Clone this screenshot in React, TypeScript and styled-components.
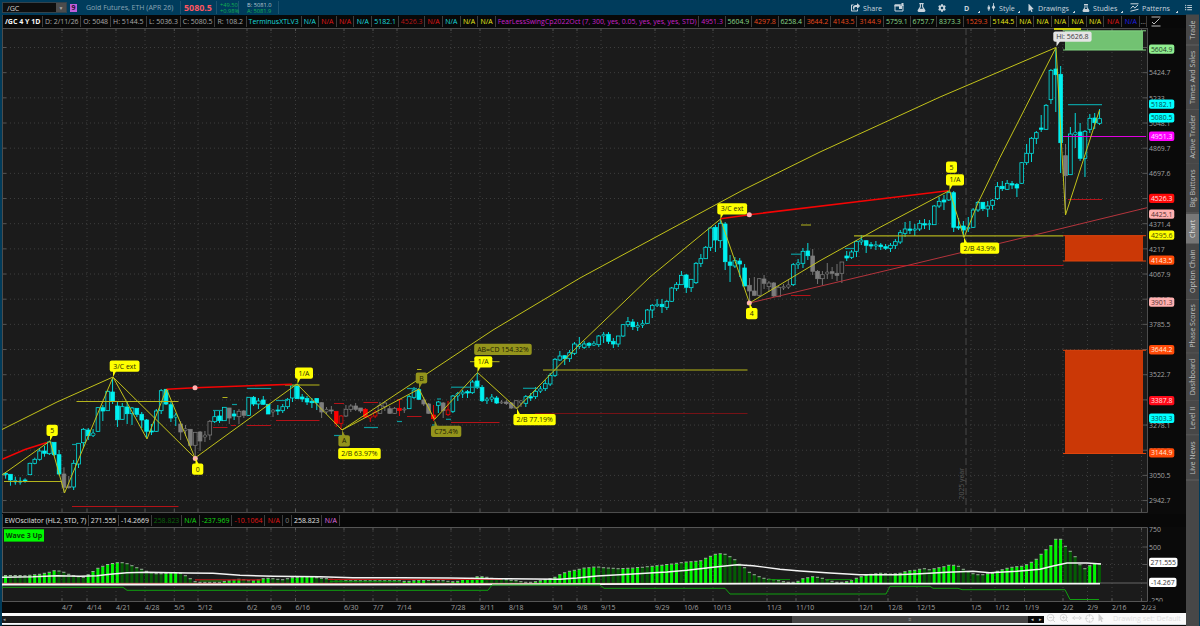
import React from "react"
import styled, { createGlobalStyle } from "styled-components"
import { FaFlask, FaCog, FaMousePointer, FaListUl, FaShareSquare } from "react-icons/fa"
import { ZoomIn, ZoomOut, MoveHorizontal, Crosshair } from "lucide-react"

const GlobalStyle = createGlobalStyle`
  * {
    box-sizing: border-box;
  }
  body {
    margin: 0;
    background: #0a0a0a;
    font-family: "Open Sans", "Noto Sans", sans-serif;
    overflow: hidden;
  }
  svg {
    display: block;
  }
`

const Screen = styled.div`
  display: flex;
  flex-direction: column;
  width: 1200px;
  height: 626px;
  background: #003b5a;
`

const Toolbar = styled.header`
  display: flex;
  align-items: center;
  height: 15px;
  flex: none;
  background: #003c5c;
  color: #c9d4dc;
  font-size: 7.1px;
  white-space: nowrap;
`

const SymbolInput = styled.div`
  display: flex;
  justify-content: space-between;
  align-items: center;
  width: 65px;
  height: 11px;
  margin-left: 2px;
  padding-left: 4px;
  background: #0e0e0e;
  border: 1px solid #33424b;
  color: #d0d0d0;
  font-size: 7.2px;
`

const DropButton = styled.span`
  display: grid;
  place-items: center;
  width: 10px;
  height: 9px;
  background: #4c4c4c;
  color: #aaa;
  font-size: 5px;
`

const LinkBadge = styled.span`
  display: grid;
  place-items: center;
  width: 7px;
  height: 8px;
  margin: 0 5px 0 3px;
  background: #c05fdc;
  color: #2a0d33;
  font-size: 7px;
  font-weight: 700;
  line-height: 8px;
`

const Quote = styled.div<{ w: number; color?: string; size?: number; bold?: boolean; pad?: number }>`
  display: flex;
  flex-direction: column;
  justify-content: center;
  align-items: flex-start;
  width: ${(p) => p.w}px;
  height: 13px;
  padding-left: ${(p) => p.pad || 4}px;
  color: ${(p) => p.color || "#8ba5b4"};
  font-size: ${(p) => p.size || 7}px;
  line-height: ${(p) => (p.size && p.size < 6 ? "6px" : "13px")};
  font-weight: ${(p) => (p.bold ? 700 : 400)};
  border-right: 1px solid #1d536f;
`

const Bid = styled.span`
  color: #b6c6d0;
`

const Spacer = styled.div`
  flex: 1;
`

const ToolButton = styled.div<{ w: number; corner?: boolean }>`
  display: flex;
  align-items: center;
  gap: 3px;
  width: ${(p) => p.w}px;
  height: 15px;
  flex: none;
  background: ${(p) =>
    p.corner ? "linear-gradient(135deg, transparent 50%, #c3ced6 50%) right 7px bottom 2px / 2px 2px no-repeat" : "none"};
`

const Body = styled.div`
  display: flex;
  flex: 1;
  min-height: 0;
`

const Workspace = styled.main`
  display: flex;
  flex-direction: column;
  width: 1184px;
  margin-left: 2px;
  background: #0a0a0a;
`

const StudyRow = styled.div<{ h: number }>`
  display: flex;
  height: ${(p) => p.h}px;
  flex: none;
  background: #080808;
  border-left: 1px solid #444;
`

const StudyCell = styled.div<{ w: number; c: string; bold?: boolean }>`
  display: flex;
  justify-content: center;
  width: ${(p) => p.w}px;
  flex: none;
  margin: 1px 0;
  line-height: 11px;
  color: ${(p) => p.c};
  font-size: ${(p) => (p.bold ? 7 : 6.95)}px;
  font-weight: ${(p) => (p.bold ? 700 : 400)};
  border-right: 1px solid #3d3d3d;
  white-space: nowrap;
`

const ScrollRow = styled.div`
  display: flex;
  height: 12px;
  flex: none;
  background: #fafafa;
  border-bottom: 1px solid #d6dde2;
`

const ScrollTrack = styled.div`
  display: flex;
  justify-content: space-between;
  align-items: center;
  width: 1026px;
  height: 7px;
  margin-top: 3px;
  padding-left: 1px;
  background: #1c1c1c;
  color: #999;
  font-size: 5px;
`

const ScrollThumb = styled.div`
  width: 236px;
  height: 7px;
  line-height: 6px;
  text-align: center;
  background: #464646;
`

const ScrollButtons = styled.div`
  display: flex;
  justify-content: space-around;
  width: 16px;
  height: 7px;
  margin-top: 3px;
  line-height: 6px;
  background: #080808;
  color: #ccc;
  font-size: 5px;
`

const DrawTools = styled.div`
  display: flex;
  align-items: center;
  gap: 3px;
  flex: 1;
  padding-left: 2px;
  color: #cfcfcf;
  font-size: 7.2px;
  white-space: nowrap;
`

const DrawSet = styled.span`
  margin-left: 5px;
  color: #dedede;
`

const Sidebar = styled.aside`
  width: 13px;
  background: #474747;
`

const SideTab = styled.div<{ h: number; active?: boolean }>`
  display: flex;
  align-items: center;
  justify-content: center;
  width: 13px;
  height: ${(p) => p.h}px;
  background: ${(p) => (p.active ? "#777" : "#474747")};
  border-top: 1px solid #606060;
  color: ${(p) => (p.active ? "#dedede" : "#c0c0c0")};
  font-size: 7.1px;
  line-height: 13px;
  writing-mode: vertical-rl;
  transform: rotate(180deg);
  white-space: nowrap;
`

const CYAN = "#18dcdf"
const RED = "#e01616"
const GREEN = "#8ad88a"
const ORANGE = "#e84a1c"
const YELLOW = "#ecec18"
const GREY = "#a8a8a8"

const priceStudies: [string, number, string][] = [
  ["/GC 4 Y 1D", 40.3, "#f6f6f6"],
  ["D: 2/11/26", 38, GREY],
  ["O: 5048", 29.7, GREY],
  ["H: 5144.5", 35.6, GREY],
  ["L: 5036.3", 34.7, GREY],
  ["C: 5080.5", 33.7, GREY],
  ["R: 108.2", 31.7, GREY],
  ["TerminusXTLV3", 55, CYAN],
  ["N/A", 17.4, CYAN],
  ["N/A", 17.6, RED],
  ["N/A", 17.7, RED],
  ["N/A", 18, CYAN],
  ["5182.1", 26.7, CYAN],
  ["4526.3", 26.3, "#b81616"],
  ["N/A", 17.6, RED],
  ["N/A", 17.7, CYAN],
  ["N/A", 17.8, YELLOW],
  ["N/A", 17.5, YELLOW],
  ["FearLessSwingCp2022Oct (7, 300, yes, 0.05, yes, yes, yes, STD)", 203.5, "#c820c8"],
  ["4951.3", 26.3, "#c820c8"],
  ["5604.9", 26.5, GREEN],
  ["4297.8", 26.4, ORANGE],
  ["6258.4", 26.3, GREEN],
  ["3644.2", 26.2, ORANGE],
  ["4143.5", 26.4, ORANGE],
  ["3144.9", 26.6, ORANGE],
  ["5759.1", 26.6, GREEN],
  ["6757.7", 26.4, GREEN],
  ["8373.3", 26.8, GREEN],
  ["1529.3", 26.7, ORANGE],
  ["5144.5", 26.7, YELLOW],
  ["N/A", 17.3, YELLOW],
  ["N/A", 17.4, YELLOW],
  ["N/A", 17.6, YELLOW],
  ["N/A", 17.4, YELLOW],
  ["N/A", 17.6, YELLOW],
  ["N/A", 18, RED],
  ["N/A", 17.7, "#2020e8"],
  ["...", 7, GREY],
]

const oscStudies: [string, number, string][] = [
  ["EWOscilator (HL2, STD, 7)", 86, "#e0e0e0"],
  ["271.555", 30, "#e0e0e0"],
  ["-14.2669", 33, "#e0e0e0"],
  ["258.823", 30, "#0c640c"],
  ["N/A", 17.7, "#14dc14"],
  ["-237.969", 32.8, "#14dc14"],
  ["-10.1064", 33, RED],
  ["N/A", 17.5, RED],
  ["0", 9.3, "#808080"],
  ["258.823", 30, "#e0e0e0"],
  ["N/A", 18, "#e070e0"],
]

const sideTabs: [string, number][] = [
  ["Trade", 30.5],
  ["Times And Sales", 64],
  ["Active Trader", 54.5],
  ["Big Buttons", 49.5],
  ["Chart", 30],
  ["Option Chain", 56],
  ["Phase Scores", 53.7],
  ["Dashboard", 48.3],
  ["Level II", 34.5],
  ["Live News", 44.5],
]

// kind high top bottom low
// u/d = cyan hollow/solid, h/g = grey hollow/solid, s/r = red hollow/solid
const candleData = `
d 472 473.3 474.3 478.7|d 474 474.3 480 485.7|u 476.7 480.3 482 484.7|u 477.3 481 482.3 484.7|d 478.3 480 481.3 482.7
u 462.7 463.3 474.7 475|u 457.7 459.3 463.3 464.3|u 448 451 459.3 460.7|d 446 451 453.3 456.7|u 440.7 442 453.7 455
d 442 442.3 454.7 456|d 450 454.7 474 475|g 467.3 474 487.3 492.7|g 476 486.7 487.7 488.7|u 460 463.3 487 490
u 443 443.3 464 468|u 428 429.3 442.7 448|d 428 430 435.7 440|u 429 433 435.7 437|u 407 407.7 431.3 432
d 405 407.7 411 421|u 390 391.3 410.7 411|d 378 392 401.3 404|d 401.3 406 419.7 427|u 403 406.7 419.3 420
d 401 407 413.7 424|u 407 408 413.7 425|d 408 408.3 414.3 417|d 412 414.3 420 428|d 419 420 431.3 438
d 424 431 432 435|u 409 411 431.3 432|u 389 390.7 410.7 414|d 389 389.3 404 405|d 401 404.7 418 422
u 413 415 417.3 426|g 421 424 432 440|h 425 428.7 430.7 436|g 429 429.3 445.3 447|h 432 432.3 445.3 458
g 431 432 441 451|h 431 435 437.3 442|h 420 421.3 435 440|u 410 416.7 421.7 423|d 411 416 420.7 423
u 407 407.3 420.7 421|g 408 408 418 424|d 410 414 416 420|h 409 411.3 416.7 424|g 410 411 415.3 418
u 397 397.3 415.3 416|d 396 397.3 404 406|u 398 401 404 409|d 396 400 404.3 405|d 404 404.3 414 414
h 409 410 412 417|d 405 410 411 415|u 404 406.7 410.7 413|u 398 399.3 406.7 409|u 385 386 398 402
d 384 384.3 398.7 399|d 394 397 399 402|d 396 398.5 402 405|d 398 401.3 402.7 408|d 398 398.5 402.7 410
g 402 402.7 412 418|h 407 409.3 412 414|g 406 410 411 414|r 411 411.3 423.3 427|s 415 416 423.3 430
h 405 409.3 416 417|h 404 406 409.3 412|g 403 406 409.3 411|g 408 408 411 413|r 408 409.3 417 418
s 415 415.7 418 422|s 410 412.7 416 418|h 402 405.3 413.3 414|h 401 403 406.7 411|g 406 408.7 413.3 414
h 407 408.3 413.3 414|r 400 408.3 410.5 416|h 407 409 410 413|u 395 396.7 408.7 409|u 387 390 397.3 399
d 388 389.7 399.3 400|g 397 400 404 406|g 403 404 413.3 414|r 405 415 418.7 421|u 401 402 405.3 413
g 402 403 410.7 418|s 401 410 414.7 416|u 395 396 411.3 413|u 392 393.3 396 401|u 390 392 394 398
d 390 391.7 393 398|u 380 382 392.7 394|d 373 381 387.7 389|d 385 387.3 400.7 402|u 397 399 400.7 404
u 394 397 399.3 402|d 396 398 403 404|h 400 402 403 404|g 400 402 403.5 405|g 402 403 408 409
h 400 400.7 408 409|h 400 400.7 403 407|u 395 396.7 403.3 407|d 393 396.7 398 401|u 387 391.3 396.7 399
u 386 388.7 391.3 393|u 380 383.7 388.7 391|u 373 375.3 384 386|u 358 359.3 375.3 377|u 351 356 360 361
d 355 355.7 358.7 365|u 350 352.7 358.7 362|u 342 344 353.3 355|u 337 344.5 346.5 349|u 341 344 347.3 349
d 342 343.3 345.3 348|u 341 343.3 345.3 346|u 335 336 344.7 347|u 332 334.3 336 343|d 332 334.3 341.3 344
d 338 341.3 344 348|u 336 336 344 347|u 324 324.7 336 337|u 317 321.7 324.7 327|d 319 322 326.7 330
u 322 325.3 327.3 331|u 320 323.3 325.3 328|u 309 310 323.3 324|u 304 305.3 310 318|u 299 304.3 305.7 307
d 299 304.3 306.7 313|u 300 301.3 307.3 310|u 287 288 301.3 302|u 282 284.3 288.7 291|u 271 275.3 284.7 285
d 274 275 287.3 293|u 279 279.3 287.7 292|u 262 263.3 282.7 284|u 254 258.7 263.3 267|u 246 247.3 258.7 259
u 227 228 247.3 251|d 225 227.3 240 252|u 220 223.3 240.7 248|d 222 224 261.7 270|d 255 262 265.3 282
u 257 260.7 266 268|d 258 261 264 277|d 264 268 286 286|g 278 285.3 291 303|g 277 291 295.3 296
h 278 278.7 295.3 297|g 275 279 283.3 289|h 281 283 286.7 292|g 282 283 296 297|h 286 287.3 296.7 297
h 284 286.7 288 290|h 280 284.7 287.3 289|u 263 264.7 284.7 286|u 259 262.7 264.7 269|u 248 251.3 263.3 268
d 243 251 255.7 260|g 249 256 271.3 275|g 270 271.3 278.7 284|h 271 274.7 278.7 285|h 263 272 274 279
g 267 271.7 273.3 279|g 264 273.3 275.3 281|h 262 262 273.3 283|d 251 256 258 261|u 250 252 257.3 259
u 240 241.3 251.3 257|u 235 240 242 245|d 240 240.7 245.3 253|d 242 244.7 246 249|u 241 244.7 246 250
d 243 245 246.7 250|d 244 246.7 248.3 250|u 243 245.3 248.3 252|u 239 241.7 245.3 249|u 230 232.7 242 244
u 222 229 233.3 237|d 221 229 230.3 234|u 224 229 230.3 236|u 220 223.3 229 231|d 219 223.7 225 229
u 220 223.7 224.7 230|u 205 206 224.7 225|u 197 201.3 206 208|d 195 200 202 210|u 191 192.7 200 201
d 191 192.7 227.3 232|d 218 226.7 228 230|d 221 226 230 237|u 217 227.3 228.7 232|u 208 210 227.3 228
u 201 202.3 210 212|d 202 202.3 208.7 211|u 201 206 209 217|u 199 200.3 205.3 210|u 182 186.7 198.7 200
d 181 186.3 188.7 191|u 180 183.3 189.3 190|d 181 183.7 185 189|d 183 184.3 188 197|u 162 162.7 183.3 184
u 144 153.3 162.7 165|u 137 138.3 153.3 162|u 131 132.7 138.3 144|d 115 128 129.3 132|u 104 105.3 129.3 130
u 69 70.3 99.7 104|d 48 69 74.7 112|d 66 74.3 142.7 173|g 144 155.7 175.7 214|u 127 134 174.7 175
u 113 132.3 134.7 148|d 123 132 158.3 161|u 130 131.3 158.3 177|u 114 118.3 129.3 133|d 113 118 122.7 129
u 109 118.7 123.3 125`

const candles = candleData
  .trim()
  .split(/[|\n]/)
  .map((row) => {
    const [kind, ...nums] = row.split(" ")
    const [high, top, bottom, low] = nums.map(Number)
    return { kind, high, top, bottom, low }
  })

const barX = (i: number) => 5.6 + i * 4.862

const gridX = [62, 87, 116, 145, 174.3, 198, 247, 271, 295.5, 344, 373, 397, 451, 480, 509, 553, 577, 601, 655, 684, 713, 767, 796, 859, 888, 917, 971, 995, 1024.5, 1063, 1087.5, 1112, 1141.5]
const dates = ["4/7", "4/14", "4/21", "4/28", "5/5", "5/12", "6/2", "6/9", "6/16", "6/30", "7/7", "7/14", "7/28", "8/11", "8/18", "9/1", "9/8", "9/15", "9/29", "10/6", "10/13", "11/3", "11/10", "12/1", "12/8", "12/15", "1/5", "1/12", "1/19", "2/2", "2/9", "2/16", "2/23"]
const gridY = Array.from({ length: 19 }, (_, i) => 47.5 + i * 25.17)

const ticks: [string, number][] = [
  ["5424.7", 72.7], ["5233", 98], ["5048.1", 123.3], ["4869.7", 148.5], ["4697.6", 173.7], ["4371.4", 224], ["4217", 249.3],
  ["4067.9", 274.5], ["3924.2", 299], ["3785.5", 324.5], ["3522.7", 374.7], ["3278.1", 425.2], ["3155.9", 450.3], ["3050.5", 475.5], ["2942.7", 500.6],
]

const priceTags: [string, number, string, string][] = [
  ["5604.9", 49, "#90ee90", "#26402a"],
  ["5182.1", 104, "#00ffff", "#084a4a"],
  ["5080.5", 117.7, "#00ffff", "#084a4a"],
  ["4951.3", 136.2, "#ff00ff", "#ffe0ff"],
  ["4526.3", 198.3, "#ff0a0a", "#ffe0e0"],
  ["4425.1", 214, "#ffb0b0", "#553030"],
  ["4295.6", 235, "#ffff00", "#4a4a08"],
  ["4143.5", 260, "#ff4a08", "#ffe6d8"],
  ["3901.3", 302, "#ffb0b0", "#553030"],
  ["3644.2", 349.7, "#ff4a08", "#ffe6d8"],
  ["3387.8", 400.5, "#ff0a1a", "#ffe0e0"],
  ["3303.3", 418.2, "#00ffff", "#084a4a"],
  ["3144.9", 452.8, "#ff4a08", "#ffe6d8"],
]

const trendLines = [
  "2,429.5 57,402 113,377",
  "2,475 50,441 64.5,493 113,377 147,439 166.5,389 195,458",
  "113,377 195,458 297,384 342,430 419,389 434.5,419.5 477.5,372.5 517,408.5 580,344 650,277 720.5,219 749.5,303 820,260.7 880,227.3 949.5,190.5 964,237.5 978,203 1000,157.5 1056,47.5 1065.5,215 1099.5,110",
  "342,430 493,330 580,278 743,190 820,152 940,97 1056,47.5",
]

// x1, x2, y
const levels: { color: string; width: number; rows: number[][] }[] = [
  { color: "#b4b41c", width: 1, rows: [[4, 62, 481.5], [76.5, 178.5, 401.5], [470, 499.5, 361.7], [801, 811, 225], [417, 421.5, 369.5], [222.5, 227.5, 397.5]] },
  { color: "#85851a", width: 1.7, rows: [[285, 319.5, 385], [543, 747.5, 370]] },
  { color: "#b0b01c", width: 1.3, rows: [[854, 1063, 235.8]] },
  { color: "#f0f000", width: 1.6, rows: [[1054, 1081, 29]] },
  { color: "#b41218", width: 1, rows: [[72, 178.5, 506.5], [213, 227.5, 427.5], [231, 236, 425.5], [247, 271, 425.5], [276, 319.5, 420.5], [334, 344, 403.5], [363.5, 378, 402.5], [397, 402, 399.5], [407, 421.5, 416.5], [451, 499.5, 422.5], [791, 810.5, 295.5], [845, 1063.5, 265.5], [1068, 1102, 199.5]] },
  { color: "#761216", width: 1, rows: [[535, 747.5, 413.5]] },
  { color: "#0b9a9d", width: 1.2, rows: [[213, 222, 410.5], [232, 237, 404.5], [72, 77, 444.5], [247, 271, 388.5], [276, 288, 400.5], [334, 342, 435.5], [364, 378, 427.5], [397, 402, 421.5], [407, 417, 388.5], [451, 480, 387.2], [437, 441, 399], [446, 451, 419.3], [432, 436, 425], [523, 538, 388.3], [791, 801, 254.2], [845, 854, 248.5], [1068, 1102, 104.6]] },
]

// text, x, y, width, pointer tip x, pointer tip y, olive
const bubbles: [string, number, number, number, number, number, boolean?][] = [
  ["5", 46.5, 424.7, 11.3, 50, 441],
  ["3/C ext", 109.7, 360.5, 29.8, 113, 377],
  ["0", 192, 463.5, 11.3, 195.5, 458],
  ["1/A", 295, 367.5, 18, 297.5, 384],
  ["A", 338.4, 435.3, 11.5, 342, 430, true],
  ["2/B 63.97%", 338.2, 448, 42.5, 0, 0],
  ["B", 415.7, 372.4, 11.5, 419, 389, true],
  ["C75.4%", 431, 425.7, 30.3, 434.5, 420, true],
  ["AB=CD 154.32%", 474.2, 343.7, 57.5, 0, 0, true],
  ["1/A", 474.3, 356.3, 18, 477.5, 372.5],
  ["2/B 77.19%", 513.4, 414, 42.3, 517, 408.5],
  ["3/C ext", 717.3, 203.3, 29.8, 720.5, 219],
  ["4", 746, 308, 11.5, 749.5, 303],
  ["5", 946, 161.5, 11, 0, 0],
  ["1/A", 946, 174.2, 18, 949.5, 190.5],
  ["2/B 43.9%", 960.2, 242.5, 39, 964, 237.5],
]

const candleColor = (kind: string) => (kind === "g" || kind === "h" ? "#7d7d7d" : kind === "r" || kind === "s" ? "#f00" : "#00f0f0")

function Candles() {
  return (
    <g>
      {candles.map((c, i) => {
        const x = barX(i)
        const color = candleColor(c.kind)
        const solid = "dgr".includes(c.kind)
        const h = c.bottom - c.top
        return (
          <g key={i} stroke={color} strokeWidth={0.9}>
            <line x1={x} x2={x} y1={c.high} y2={c.top} />
            <line x1={x} x2={x} y1={c.bottom} y2={c.low} />
            <rect
              x={x - 1.85}
              y={c.top}
              width={3.7}
              height={Math.max(h, 1)}
              rx={!solid && h < 3 ? 1.2 : 0}
              fill={solid ? color : "#1b1b1b"}
              strokeWidth={0.75}
            />
          </g>
        )
      })}
    </g>
  )
}

function Bubble({ data }: { data: (typeof bubbles)[number] }) {
  const [text, x, y, w, px, py, olive] = data
  const fill = olive ? "#94941c" : "#ffff00"
  const edge = py > y ? y + 9 : y + 2
  return (
    <g>
      {px > 0 && <path d={`M${px} ${py}L${px} ${edge}H${px + 4}Z`} fill={fill} />}
      <rect x={x} y={y} width={w} height={11.2} rx={2} fill={fill} />
      <text x={x + w / 2} y={y + 8.1} fontSize={6.95} textAnchor="middle" fill={olive ? "#1a1a04" : "#2c2c08"}>
        {text}
      </text>
    </g>
  )
}

function AxisTag({ y, w, fill, color, text }: { y: number; w: number; fill: string; color: string; text: string }) {
  return (
    <g>
      <rect x={1149} y={y - 4.6} width={w} height={9.3} rx={2} fill={fill} />
      <text x={1149 + w / 2} y={y + 2.5} fontSize={6.9} textAnchor="middle" fill={color}>
        {text}
      </text>
    </g>
  )
}

function PriceChart() {
  return (
    <svg width={1184} height={486} viewBox="2 28 1184 486">
      <rect x={2} y={28} width={1184} height={486} fill="#0a0a0a" />
      <rect x={2} y={28} width={1145} height={484} fill="#1b1b1b" />
      <g stroke="#3e3e3e" strokeDasharray="1 3">
        {gridX.map((x) => (
          <line key={x} x1={x} x2={x} y1={28} y2={512} />
        ))}
        {gridY.map((y) => (
          <line key={y} x1={2} x2={1147} y1={y} y2={y} />
        ))}
      </g>
      <g stroke="#555">
        {gridX.map((x) => (
          <path key={x} d={`M${x} 28v3M${x} 509v3`} />
        ))}
        {gridY.map((y) => (
          <path key={y} d={`M2 ${y}h4M1143 ${y}h4`} />
        ))}
      </g>
      <path d="M966 28V512" stroke="#414141" strokeWidth={1.2} strokeDasharray="7 3" />
      <text transform="translate(964 499.5) rotate(-90)" fontSize={6.9} fill="#5a5a5a">2025 year</text>
      <path d="M2.5 28V513M2 512.5H1147.5V28M2 28.5H1147" stroke="#4c4c4c" fill="none" />

      <rect x={1065} y={31} width={78} height={19} fill="#72c272" />
      <path d="M1063 30.8h83M1063 50h83" stroke="#84d884" />
      <rect x={1065} y={235.5} width={78} height={25.5} fill="#cb3806" />
      <rect x={1065} y={350.3} width={78} height={103} fill="#cb3806" />
      <path d="M1063 235.7h83M1063 261h83M1063 350.3h83M1063 453.5h83" stroke="#df440c" />

      <Candles />

      {levels.map((set) => (
        <g key={set.color} stroke={set.color} strokeWidth={set.width}>
          {set.rows.map(([x1, x2, y]) => (
            <line key={x1 + "-" + y} x1={x1} x2={x2} y1={y} y2={y} />
          ))}
        </g>
      ))}
      <path d="M1063 136.5H1146" stroke="#e000e0" strokeWidth={1.1} />
      <path d="M749.5 303L880 272L1040 233.7L1147 207.7" stroke="#b4343c" fill="none" />
      <g stroke="#f40404" strokeWidth={1.6} fill="none">
        <path d="M2 459.3L25 449.5L47 442.5" />
        <path d="M166.5 389.3L195 387.8L292 384.2" />
        <path d="M720.5 218.7L749.3 214.7L880 199L948 190.8" />
      </g>
      {trendLines.map((points) => (
        <polyline key={points} points={points} stroke="#c2c21a" fill="none" />
      ))}
      {[[195, 387.8], [195.3, 458.5], [749.3, 214.7], [749.3, 303]].map(([x, y]) => (
        <circle key={x + y} cx={x} cy={y} r={2.5} fill="#ffb3b3" />
      ))}
      {bubbles.map((b, i) => (
        <Bubble key={i} data={b} />
      ))}
      <path d="M1056.5 46.5V40H1061Z" fill="#e4e4e4" />
      <rect x={1053.3} y={31.6} width={38.3} height={10.2} rx={2} fill="#e4e4e4" />
      <text x={1072.4} y={39.3} fontSize={7} textAnchor="middle" fill="#3c3c3c">Hi: 5626.8</text>

      {ticks.map(([t, y]) => (
        <text key={t} x={1149} y={y + 2.5} fontSize={6.9} fill="#a2a2a2">{t}</text>
      ))}
      {priceTags.map(([t, y, fill, color]) => (
        <AxisTag key={t} text={t} y={y} w={25.3} fill={fill} color={color} />
      ))}
    </svg>
  )
}

// top of each histogram bar, b = rising, d = falling
const oscBars = (
  "b575.7 d575.7 d575.7 d575.7 d576 b575.5 b575 b574.5 b573.5 b572.5 b571 d571.3 d572.5 d574.5 d576 d577 d577.5 b575 b571.7 b568.5 b566.5 b564.7 b563.7 b563 d563 d564 d566 d568 d569.5 d571.5 " +
  "d573 d574 d574 b573.5 b573 b573 d573.5 d576 d579 d582 d582.5 d582.5 d582.5 d582.5 d582.5 b581.5 b581 b580.3 b579.5 d580 d581 b581 b580 b579 b578.5 d579 d579.5 d580 d579 b578 " +
  "b577.5 b577 b577 b577 d578 d578.5 d579 d579.5 d580 d580 d580.5 d581 d581 d581 d581 d581 d581 d581 d581 d581 d581 d581 b581.5 b581.5 b581 b580.5 b580.5 d580.5 d580.5 d581 " +
  "d581 d581.5 b582 b581.5 b580 b579.5 b578.5 b577 b577 d577.5 d578.5 d579 d579 d580 d580.5 d581 d582 d582.5 d582.5 b582 b581 b580 b579 b577.5 b575 b573 b571.5 b570.5 b569.5 b568.3 " +
  "b568 b567.3 d567.3 d568 d568.3 d568.5 d569 b568.7 b568.5 b568.3 b567.7 d567.5 d567 b566.5 b566 b565.5 b564.7 b564.3 b563.5 d563 b562.3 b562 b561.5 b561 b558.5 b556.5 b554.5 b554 d554.5 d557 " +
  "d560 d564.5 d568 d572.5 d575 d577 d578.5 d579.5 d580 d581 d582 d582.5 d582.5 b581.5 b579 b578 b577 d577.5 d578.5 d580 d581.5 d582.5 d582.5 b582 b581 b578.5 b577 b575.5 b574.5 b574 " +
  "b573.5 d574 d574.3 b574 b573.5 b572 b571 b570.5 b569.5 d569 d570 b569 b568 b567 b565.5 b565.5 d566.5 d569.5 d572 d574 d575 d575 b574 b573.5 b571.5 b570 b568.5 b567.5 b567 b566.5 " +
  "b565 b562.5 b559.5 b554.5 b550 b546 b539.5 b539.5 d546.5 d551.5 d557 d565 d569 b566 b564 d564"
).split(" ")

function Oscillator() {
  return (
    <svg width={1184} height={85.5} viewBox="2 527 1184 85.5">
      <rect x={2} y={527} width={1184} height={86} fill="#0a0a0a" />
      <rect x={2} y={527} width={1145} height={74.5} fill="#1b1b1b" />
      <g stroke="#3e3e3e" strokeDasharray="1 3">
        {gridX.map((x) => (
          <line key={x} x1={x} x2={x} y1={527} y2={601} />
        ))}
        <path d="M2 547H1147M2 564.5H1147" />
      </g>
      <g stroke="#555">
        {gridX.map((x) => (
          <path key={x} d={`M${x} 527v3.5M${x} 598v3.5`} />
        ))}
        <path d="M1143 547h4M1143 564.5h4" />
        <path d="M2.5 527V601.5M2 527.5H1147.5V601.5H2" fill="none" />
      </g>
      {oscBars.map((bar, i) => {
        const top = Number(bar.slice(1))
        return (
          <g key={i}>
            <rect x={barX(i) - 1.6} y={top} width={3} height={583 - top} fill={bar[0] === "b" ? "#00f400" : "#045c04"} />
            <rect x={barX(i) - 1.7} y={top - 0.7} width={3.2} height={0.9} fill="#a8c4a8" />
          </g>
        )
      })}
      <path d="M1100 583H1147" stroke="#666" />
      <path d="M195 579.8H262M328 579.3H502" stroke="#b81414" strokeWidth={1.2} />
      <path d="M200 581H222M330 581.3H400M768 579.6H790M826 579.6H852" stroke="#0a900a" />
      <path d="M2 583.4H790" stroke="#e08080" />
      <path d="M2 584.7H345L790 583.6H1100" stroke="#f8f8f8" strokeWidth={1.7} fill="none" />
      <polyline
        fill="none"
        stroke="#10a010"
        points="2,587.3 123,587.3 127,590.3 488,590.3 492,585 600,585 604,588.3 725,588.3 730,594 886,594 890,586.3 930,586.3 933,588.3 958,588.3 962,589.7 1065,589.7 1070,599.5 1099,599.5"
      />
      <polyline
        fill="none"
        stroke="#f4f4f4"
        strokeWidth={1.4}
        points="2,577.3 33,576.7 57,575.7 80,576.3 97,575.7 110,574.3 127,572.7 147,572.3 187,573 213,573.3 240,575.3 273,576.3 320,576.7 353,577.7 400,577.8 450,578 500,578.7 560,579.3 577,578 597,576 633,574 667,572 687,570.3 713,567.3 737,564.7 753,565.7 780,569.3 800,571 830,573 860,574.7 897,574.7 920,573.7 947,572.3 973,571.3 990,572.7 1017,571.3 1040,569.3 1053,566 1067,563 1087,563 1101,564"
      />
      <rect x={4} y={529.3} width={40} height={12.3} fill="#00f800" />
      <text x={24} y={538.1} fontSize={7} fontWeight={700} textAnchor="middle" fill="#064006">Wave 3 Up</text>
      {dates.map((d, i) => (
        <text key={d} x={gridX[i]} y={610} fontSize={6.9} fill="#a2a2a2">{d}</text>
      ))}
      <g fontSize={6.9} fill="#a2a2a2">
        <text x={1149} y={531.8}>750</text>
        <text x={1149} y={549.6}>500</text>
        <text x={1149} y={603}>-250</text>
      </g>
      <rect x={1148} y={601.5} width={30} height={4} fill="#0a0a0a" />
      <AxisTag y={562.3} w={28.5} fill="#fff" color="#333" text="271.555" />
      <AxisTag y={582.3} w={27.5} fill="#fff" color="#333" text="-14.267" />
    </svg>
  )
}

const CandleIcon = () => (
  <svg width="9" height="9" viewBox="0 0 9 9" fill="none" stroke="currentColor">
    <path d="M1.8 2v6M6.5 0v8" strokeWidth=".8" />
    <rect x=".6" y="3.6" width="2.4" height="2.8" fill="currentColor" stroke="none" />
    <path d="M6.5 1.8L8.3 4.3L6.5 6.8L4.7 4.3Z" fill="currentColor" stroke="none" />
  </svg>
)

const CalendarIcon = () => (
  <svg width="10" height="9" viewBox="0 0 10 9">
    <path d="M1 2H9V8H1Z" fill="none" stroke="currentColor" />
    <path d="M.5 1.5h6v2h-6zM5 3h3v3H5zM7.5 0h2v3h-2z" fill="currentColor" />
  </svg>
)

const PatternIcon = () => (
  <svg width="9" height="9" viewBox="0 0 9 9" fill="none" stroke="currentColor">
    <path d="M.5 .8H8.5M.5 8.2L8.5 6.2M.8 5.5L3 3L4.8 5L8 2" />
  </svg>
)

const AxisIcon = () => (
  <svg width="10" height="11" viewBox="0 0 10 11" fill="none" stroke="#bdbdbd">
    <path d="M.5 1H9.5M.5 10H9.5M1 6L3 8L8.5 2.5" />
  </svg>
)

const AxisIconCell = styled.div`
  margin: 1px 0 0 4px;
`

const App = () => {
  return (
    <Screen>
      <GlobalStyle />
      <Toolbar>
        <SymbolInput>
          /GC <DropButton>▼</DropButton>
        </SymbolInput>
        <LinkBadge>9</LinkBadge>
        <Quote w={99} size={7}>Gold Futures, ETH (APR 26)</Quote>
        <Quote w={36} color="#ff5560" size={8.9} bold pad={3}>5080.5</Quote>
        <Quote w={22} color="#14b052" size={5.7} pad={3}>
          <span>+49.50</span>
          <span>+0.98%</span>
        </Quote>
        <Quote w={40} color="#14b052" size={5.7} pad={8}>
          <Bid>B: 5081.0</Bid>
          <span>A: 5081.9</span>
        </Quote>
        <Spacer />
        <ToolButton w={43}><FaShareSquare size={9} /> Share</ToolButton>
        <ToolButton w={23}><CalendarIcon /></ToolButton>
        <ToolButton w={21}><FaFlask size={9} /></ToolButton>
        <ToolButton w={26}><FaCog size={8} /></ToolButton>
        <ToolButton w={23} corner><b>D</b></ToolButton>
        <ToolButton w={40} corner><CandleIcon /> Style</ToolButton>
        <ToolButton w={55} corner><FaMousePointer size={8} /> Drawings</ToolButton>
        <ToolButton w={48} corner><FaFlask size={8} /> Studies</ToolButton>
        <ToolButton w={55} corner><PatternIcon /> Patterns</ToolButton>
        <ToolButton w={15}><FaListUl size={7} /></ToolButton>
      </Toolbar>
      <Body>
        <Workspace>
          <StudyRow h={13}>
            {priceStudies.map(([text, w, c], i) => (
              <StudyCell key={i} w={w} c={c} bold={i === 0}>{text}</StudyCell>
            ))}
            <AxisIconCell>
              <AxisIcon />
            </AxisIconCell>
          </StudyRow>
          <PriceChart />
          <StudyRow h={13}>
            {oscStudies.map(([text, w, c], i) => (
              <StudyCell key={i} w={w} c={c}>{text}</StudyCell>
            ))}
          </StudyRow>
          <Oscillator />
          <ScrollRow>
            <ScrollTrack>
              <span>◂</span>
              <ScrollThumb>≡</ScrollThumb>
            </ScrollTrack>
            <ScrollButtons>
              <span>◂</span>
              <span>▸</span>
            </ScrollButtons>
            <DrawTools>
              <ZoomOut size={10} />
              <ZoomIn size={10} />
              <MoveHorizontal size={10} />
              <Crosshair size={9} />
              <FaMousePointer size={8} />
              <DrawSet>Drawing set: Default</DrawSet>
            </DrawTools>
          </ScrollRow>
        </Workspace>
        <Sidebar>
          {sideTabs.map(([name, h]) => (
            <SideTab key={name} h={h} active={name === "Chart"}>{name}</SideTab>
          ))}
        </Sidebar>
      </Body>
    </Screen>
  )
}

export default App
